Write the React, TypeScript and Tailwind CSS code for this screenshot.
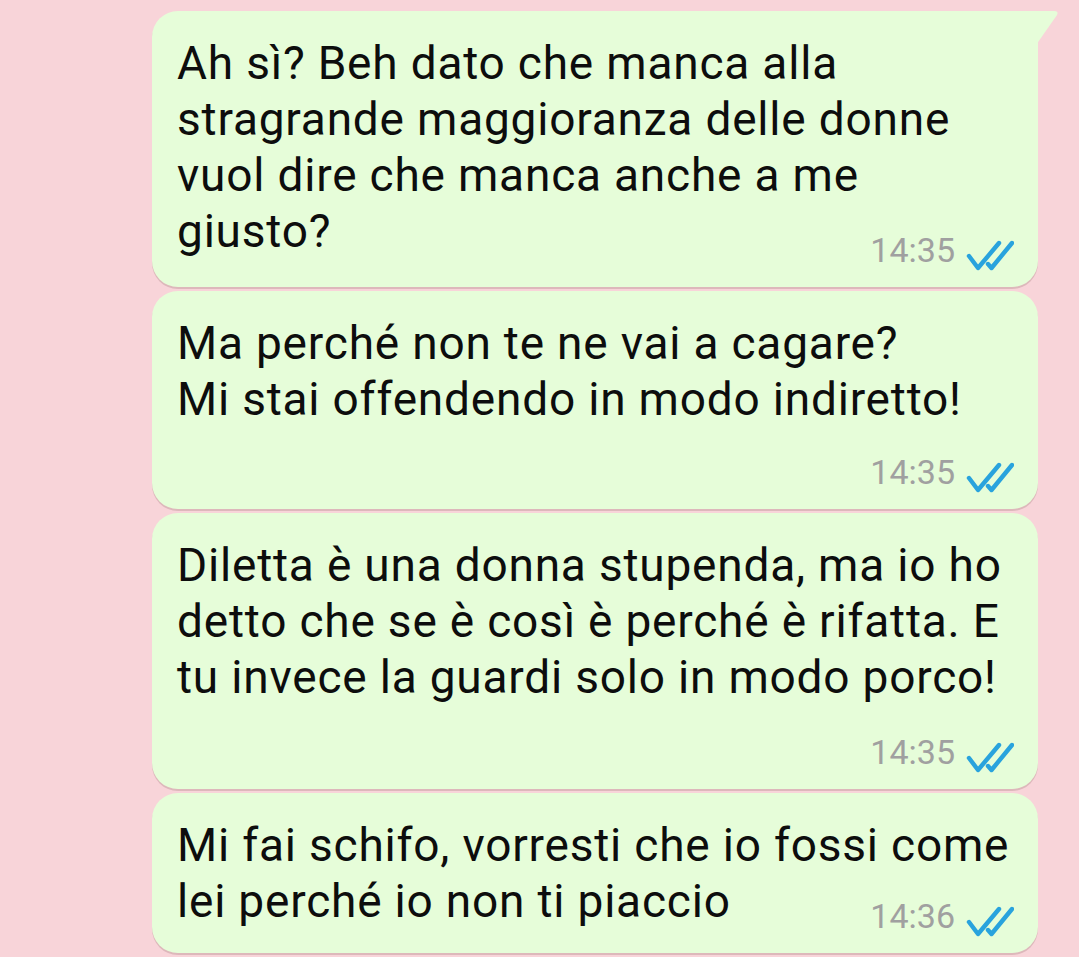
const messages = [
  {
    lines: [
      "Ah sì? Beh dato che manca alla",
      "stragrande maggioranza delle donne",
      "vuol dire che manca anche a me",
      "giusto?",
    ],
    time: "14:35",
    tail: true,
    timeClass: "-mt-[29px]",
  },
  {
    lines: ["Ma perché non te ne vai a cagare?", "Mi stai offendendo in modo indiretto!"],
    time: "14:35",
    tail: false,
    timeClass: "mt-[25px]",
  },
  {
    lines: [
      "Diletta è una donna stupenda, ma io ho",
      "detto che se è così è perché è rifatta. E",
      "tu invece la guardi solo in modo porco!",
    ],
    time: "14:35",
    tail: false,
    timeClass: "mt-[27px]",
  },
  {
    lines: ["Mi fai schifo, vorresti che io fossi come", "lei perché io non ti piaccio"],
    time: "14:36",
    tail: false,
    timeClass: "-mt-[33px]",
  },
];

const Ticks = () => (
  <svg width="48" height="32" viewBox="0 0 48 32" fill="none" className="ml-[11px] mb-[-2px]">
    <path d="M3 16 L12 28 L33 3" stroke="#29a3dd" strokeWidth="4.4" strokeLinecap="round" strokeLinejoin="round" />
    <path d="M22 24 L25.5 28 L46 3" stroke="#29a3dd" strokeWidth="4.4" strokeLinecap="round" strokeLinejoin="round" />
  </svg>
);

const Bubble = ({ msg }: { msg: (typeof messages)[number] }) => (
  <div
    className={`relative ml-[152px] w-[886px] bg-[#e6fdd9] rounded-[26px] shadow-[0_2px_0_rgba(150,110,110,0.28)] ${
      msg.tail ? "rounded-tr-none" : ""
    }`}
  >
    {msg.tail && (
      <svg
        width="24"
        height="34"
        viewBox="0 0 24 34"
        className="absolute top-0 right-[-22px]"
      >
        <path d="M0 0 L18 0 Q23 0 21 4 L0 34 Z" fill="#e6fdd9" />
      </svg>
    )}
    <div className="pt-[24px] pl-[25px] pr-[20px] text-[46px] leading-[56px] tracking-[0.8px] text-[#0d0d0d]">
      {msg.lines.map((l) => (
        <div key={l} className="whitespace-nowrap">
          {l}
        </div>
      ))}
    </div>
    <div className={`flex justify-end items-end pr-[24px] pb-[17px] ${msg.timeClass}`}>
      <span className="text-[34px] leading-[40px] text-[#a0a0a0]">{msg.time}</span>
      <Ticks />
    </div>
  </div>
);

export default function App() {
  return (
    <div
      className="w-[1079px] h-[957px] bg-[#f8d4d9] pt-[11px] flex flex-col gap-[4px] overflow-hidden"
      style={{ fontFamily: "Roboto, 'Noto Sans', sans-serif" }}
    >
      {messages.map((m, i) => (
        <Bubble key={i} msg={m} />
      ))}
    </div>
  );
}
